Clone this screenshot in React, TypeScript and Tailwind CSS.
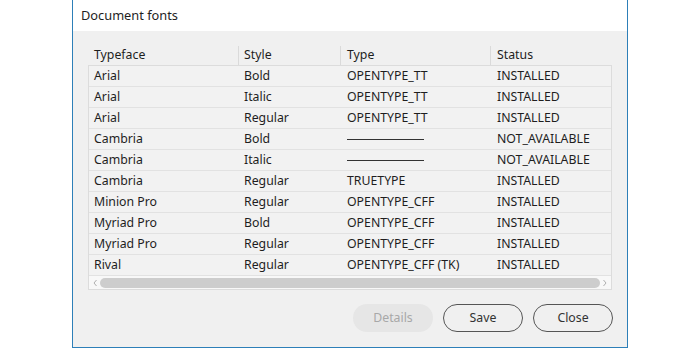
import React from "react";

const rows: [string, string, string | null, string][] = [
  ["Arial", "Bold", "OPENTYPE_TT", "INSTALLED"],
  ["Arial", "Italic", "OPENTYPE_TT", "INSTALLED"],
  ["Arial", "Regular", "OPENTYPE_TT", "INSTALLED"],
  ["Cambria", "Bold", null, "NOT_AVAILABLE"],
  ["Cambria", "Italic", null, "NOT_AVAILABLE"],
  ["Cambria", "Regular", "TRUETYPE", "INSTALLED"],
  ["Minion Pro", "Regular", "OPENTYPE_CFF", "INSTALLED"],
  ["Myriad Pro", "Bold", "OPENTYPE_CFF", "INSTALLED"],
  ["Myriad Pro", "Regular", "OPENTYPE_CFF", "INSTALLED"],
  ["Rival", "Regular", "OPENTYPE_CFF (TK)", "INSTALLED"],
];

export default function App() {
  return (
    <div
      className="w-[700px] h-[348px] bg-white text-[#1e1e1e]"
      style={{ fontFamily: '"Noto Sans", "Open Sans", sans-serif' }}
    >
      <div className="ml-[72px] w-[556px] h-[348px] border-x border-b border-[#2d7fb8] flex flex-col bg-[#f0f0f0]">
        <div className="h-[31px] bg-white flex items-center pl-[8px] text-[12.8px]">
          Document fonts
        </div>
        <div className="px-[15px] pt-[15px] text-[12.3px]">
          <div className="flex h-[19px] items-center">
            <div className="w-[151px] pl-[6px] h-full flex items-center border-r border-[#dadada]">Typeface</div>
            <div className="w-[102px] pl-[5px] h-full flex items-center border-r border-[#dadada]">Style</div>
            <div className="w-[150px] pl-[6px] h-full flex items-center border-r border-[#dadada]">Type</div>
            <div className="flex-1 pl-[6px] h-full flex items-center">Status</div>
          </div>
          <div className="border border-[#dcdcdc] bg-[#f2f2f2]">
            {rows.map((r, i) => (
              <div key={i} className="flex h-[21px] items-center border-b border-[#e2e2e2]">
                <div className="w-[150px] pl-[5px]">{r[0]}</div>
                <div className="w-[102px] pl-[5px]">{r[1]}</div>
                <div className="w-[150px] pl-[6px]">
                  {r[2] ?? <div className="w-[77px] h-px bg-[#333]" />}
                </div>
                <div className="flex-1 pl-[6px]">{r[3]}</div>
              </div>
            ))}
            <div className="h-[13px] flex items-center bg-[#f8f8f8] px-[2px]">
              <svg width="9" height="10" viewBox="0 0 9 10" className="shrink-0">
                <path d="M5.5 2 L3 5 L5.5 8" fill="none" stroke="#b0b0b0" strokeWidth="1" />
              </svg>
              <div className="flex-1 h-[10px] rounded-full bg-[#cdcdcd]" />
              <svg width="9" height="10" viewBox="0 0 9 10" className="shrink-0">
                <path d="M3.5 2 L6 5 L3.5 8" fill="none" stroke="#b0b0b0" strokeWidth="1" />
              </svg>
            </div>
          </div>
          <div className="flex justify-end gap-[10px] mt-[14px] mr-[-1px]">
            <button className="w-[80px] h-[28px] rounded-full bg-[#e6e6e6] text-[#a8a8a8] text-[12.3px]">
              Details
            </button>
            <button className="w-[80px] h-[28px] rounded-full border border-[#555] text-[#333] text-[12.3px]">
              Save
            </button>
            <button className="w-[80px] h-[28px] rounded-full border border-[#555] text-[#333] text-[12.3px]">
              Close
            </button>
          </div>
        </div>
      </div>
    </div>
  );
}
